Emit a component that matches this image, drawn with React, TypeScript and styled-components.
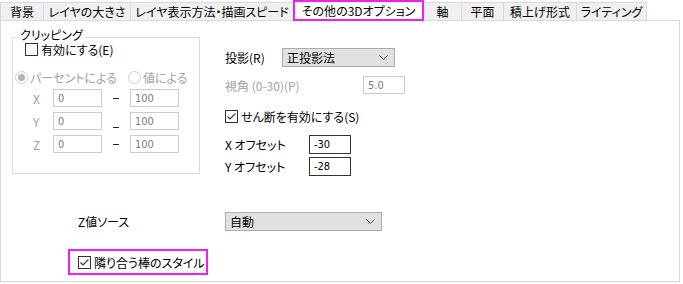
import styled, { createGlobalStyle } from "styled-components";

const GlobalStyle = createGlobalStyle`
  body {
    margin: 0;
    background: #ffffff;
    font-family: "Noto Sans CJK JP", "Noto Sans", sans-serif;
    font-size: 12px;
    font-feature-settings: "palt";
    color: #000;
  }
`;

const TABS = [
  { label: "背景", w: 44 },
  { label: "レイヤの大きさ", w: 88 },
  { label: "レイヤ表示方法・描画スピード", w: 164 },
  { label: "その他の3Dオプション", w: 131, active: true },
  { label: "軸", w: 39 },
  { label: "平面", w: 43 },
  { label: "積上げ形式", w: 74 },
  { label: "ライティング", w: 71 },
];

const Checkbox = ({ checked }: { checked?: boolean }) => (
  <CheckBoxFrame>
    {checked && (
      <svg width="11" height="11" viewBox="0 0 11 11">
        <polyline
          points="1.5,5.5 4,8 9.5,2.5"
          fill="none"
          stroke="#333"
          strokeWidth="1.1"
        />
      </svg>
    )}
  </CheckBoxFrame>
);

const Chevron = () => (
  <svg width="9" height="6" viewBox="0 0 9 6">
    <polyline points="0.5,0.5 4.5,4.5 8.5,0.5" fill="none" stroke="#555" strokeWidth="1" />
  </svg>
);

const RangeRow = ({ axis, low }: { axis: string; low?: boolean }) => (
  <Range>
    <AxisLabel>{axis}</AxisLabel>
    <NumBox $w={49}>0</NumBox>
    <DashCell>
      <Dash $low={low} />
    </DashCell>
    <NumBox $w={49}>100</NumBox>
  </Range>
);

const App = () => {
  return (
    <>
      <GlobalStyle />
      <TabBar>
        {TABS.map((t) => (
          <Tab key={t.label} $w={t.w} $active={t.active}>
            {t.label}
          </Tab>
        ))}
      </TabBar>
      <Panel>
        <TopArea>
          <GroupBox>
            <Legend>クリッピング</Legend>
            <EnableRow>
              <Checkbox />
              <span>有効にする(E)</span>
            </EnableRow>
            <RadioRow>
              <RadioItem>
                <Radio $on />
                <span>パーセントによる</span>
              </RadioItem>
              <RadioItem>
                <Radio />
                <span>値による</span>
              </RadioItem>
            </RadioRow>
            <RangeRow axis="X" />
            <RangeRow axis="Y" low />
            <RangeRow axis="Z" />
          </GroupBox>

          <RightCol>
            <FieldRow $mt={0} $h={19}>
              <FieldLabel $w={57}>投影(R)</FieldLabel>
              <Select $w={113}>
                <span>正投影法</span>
                <Chevron />
              </Select>
            </FieldRow>
            <FieldRow $mt={9} $h={18}>
              <FieldLabel $w={138} $muted>
                視角 (0-30)(P)
              </FieldLabel>
              <NumBox $w={42}>5.0</NumBox>
            </FieldRow>
            <FieldRow $mt={16} $h={13}>
              <Checkbox checked />
              <CheckText>せん断を有効にする(S)</CheckText>
            </FieldRow>
            <FieldRow $mt={12} $h={19}>
              <FieldLabel $w={84}>X オフセット</FieldLabel>
              <NumBox $w={42} $active>
                -30
              </NumBox>
            </FieldRow>
            <FieldRow $mt={3} $h={19}>
              <FieldLabel $w={84}>Y オフセット</FieldLabel>
              <NumBox $w={42} $active>
                -28
              </NumBox>
            </FieldRow>
          </RightCol>
        </TopArea>

        <ZRow>
          <FieldLabel $w={147}>Z値ソース</FieldLabel>
          <Select $w={157}>
            <span>自動</span>
            <Chevron />
          </Select>
        </ZRow>

        <Highlight>
          <Checkbox checked />
          <CheckText>隣り合う棒のスタイル</CheckText>
        </Highlight>
      </Panel>
    </>
  );
};

const TabBar = styled.div`
  display: flex;
  align-items: flex-end;
  height: 20px;
`;

const Tab = styled.div<{ $w: number; $active?: boolean }>`
  box-sizing: border-box;
  width: ${(p) => p.$w}px;
  height: ${(p) => (p.$active ? 21 : 18)}px;
  margin-left: -1px;
  margin-bottom: ${(p) => (p.$active ? -1 : 0)}px;
  display: flex;
  align-items: center;
  justify-content: center;
  white-space: nowrap;
  font-size: 12px;
  background: ${(p) => (p.$active ? "#ffffff" : "#f0f0f0")};
  border: ${(p) => (p.$active ? "2px solid #f01ef0" : "1px solid #d9d9d9")};
  border-bottom: ${(p) => (p.$active ? "2px solid #f01ef0" : "none")};
  position: relative;
  z-index: ${(p) => (p.$active ? 2 : 1)};

  &:first-child {
    margin-left: 0;
  }
`;

const Panel = styled.div`
  box-sizing: border-box;
  width: 680px;
  height: 262px;
  border: 1px solid #d9d9d9;
  background: #ffffff;
  box-shadow: 0 2px 0 #e6e6e6;
`;

const TopArea = styled.div`
  display: flex;
  align-items: flex-start;
  height: 155px;
`;

const GroupBox = styled.div`
  position: relative;
  box-sizing: border-box;
  flex: none;
  width: 188px;
  height: 137px;
  margin: 16px 0 0 11px;
  border: 1px solid #dcdcdc;
`;

const Legend = styled.span`
  position: absolute;
  top: -9px;
  left: 5px;
  padding: 0 2px;
  background: #ffffff;
  line-height: 12px;
`;

const CheckBoxFrame = styled.div`
  box-sizing: border-box;
  width: 13px;
  height: 13px;
  flex: none;
  border: 1px solid #333;
  background: #fff;
  display: flex;
  align-items: center;
  justify-content: center;
`;

const EnableRow = styled.div`
  display: flex;
  align-items: center;
  gap: 3px;
  height: 13px;
  line-height: 13px;
  margin: 5px 0 0 12px;
`;

const RadioRow = styled.div`
  display: flex;
  align-items: center;
  gap: 11px;
  height: 13px;
  margin: 15px 0 0 2px;
  white-space: nowrap;
  color: #a3a3a3;
`;

const RadioItem = styled.div`
  display: flex;
  flex: none;
  align-items: center;
  gap: 2px;
`;

const Radio = styled.div<{ $on?: boolean }>`
  box-sizing: border-box;
  flex: none;
  width: 13px;
  height: 13px;
  border-radius: 50%;
  border: 1px solid #cccccc;
  background: #fff;
  display: flex;
  align-items: center;
  justify-content: center;

  &::after {
    content: "";
    display: ${(p) => (p.$on ? "block" : "none")};
    width: 7px;
    height: 7px;
    border-radius: 50%;
    background: #b4b4b4;
  }
`;

const Range = styled.div`
  display: flex;
  align-items: center;
  height: 18px;
  margin: 5px 0 0 20px;

  &:nth-of-type(1) {
    margin-top: 10px;
  }
`;

const AxisLabel = styled.span`
  width: 20px;
  color: #a3a3a3;
`;

const NumBox = styled.div<{ $w: number; $active?: boolean }>`
  box-sizing: border-box;
  width: ${(p) => p.$w}px;
  height: 100%;
  border: 1px solid ${(p) => (p.$active ? "#333" : "#cccccc")};
  padding-left: 4px;
  display: flex;
  align-items: center;
  font-family: "DejaVu Sans Condensed", "Liberation Sans", sans-serif;
  font-size: 11px;
  color: ${(p) => (p.$active ? "#000" : "#7a7a7a")};
`;

const DashCell = styled.div`
  width: 28px;
  height: 100%;
  display: flex;
  justify-content: center;
  align-items: center;
`;

const Dash = styled.div<{ $low?: boolean }>`
  width: 6px;
  height: 1px;
  background: #222;
  transform: translateY(${(p) => (p.$low ? 6 : 0)}px);
`;

const RightCol = styled.div`
  display: flex;
  flex-direction: column;
  margin: 27px 0 0 25px;
`;

const FieldRow = styled.div<{ $mt: number; $h: number }>`
  display: flex;
  align-items: center;
  height: ${(p) => p.$h}px;
  margin-top: ${(p) => p.$mt}px;
`;

const FieldLabel = styled.span<{ $w: number; $muted?: boolean }>`
  width: ${(p) => p.$w}px;
  flex: none;
  white-space: nowrap;
  color: ${(p) => (p.$muted ? "#a3a3a3" : "#000")};
`;

const CheckText = styled.span`
  margin-left: 3px;
  white-space: nowrap;
`;

const Select = styled.div<{ $w: number }>`
  box-sizing: border-box;
  width: ${(p) => p.$w}px;
  height: 19px;
  border: 1px solid #adadad;
  background: #e1e1e1;
  display: flex;
  align-items: center;
  justify-content: space-between;
  padding: 0 6px 0 4px;
`;

const ZRow = styled.div`
  display: flex;
  align-items: center;
  height: 19px;
  margin: 36px 0 0 77px;
`;

const Highlight = styled.div`
  box-sizing: border-box;
  width: 140px;
  height: 26px;
  margin: 18px 0 0 67px;
  border: 2px solid #f01ef0;
  display: flex;
  align-items: center;
  padding-left: 8px;
`;

export default App;
